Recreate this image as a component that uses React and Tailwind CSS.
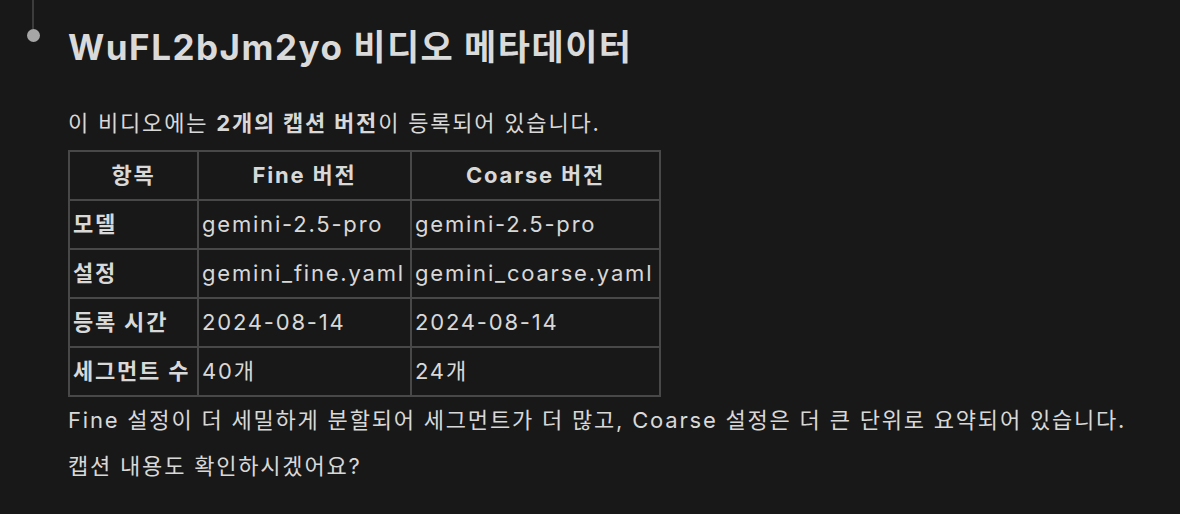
export default function App() {
  const rows = [
    ["모델", "gemini-2.5-pro", "gemini-2.5-pro"],
    ["설정", "gemini_fine.yaml", "gemini_coarse.yaml"],
    ["등록 시간", "2024-08-14", "2024-08-14"],
    ["세그먼트 수", "40개", "24개"],
  ];
  return (
    <div className="w-[1180px] h-[514px] bg-[#181818] text-[#d8d8d8] flex overflow-hidden font-['Inter','Noto_Sans_CJK_KR',sans-serif]">
      <div className="w-[68px] shrink-0 flex flex-col items-center pr-[2px]">
        <div className="w-[2px] h-[29px] bg-[#3c3c3c]"></div>
        <div className="w-[13px] h-[13px] rounded-full bg-[#a6a6a6]"></div>
      </div>
      <div className="flex flex-col">
        <h1 className="mt-[25px] text-[35px] leading-[44px] font-bold text-[#dadada] tracking-[1.5px]">
          WuFL2bJm2yo 비디오 메타데이터
        </h1>
        <p className="mt-[40px] text-[22px] leading-[28px] tracking-[1.8px]">
          이 비디오에는 <b className="font-bold">2개의 캡션 버전</b>이 등록되어 있습니다.
        </p>
        <table className="mt-[13px] border-collapse text-[22px] tracking-[1.8px] w-[591px] table-fixed">
          <colgroup>
            <col className="w-[129px]" />
            <col className="w-[213px]" />
            <col className="w-[249px]" />
          </colgroup>
          <thead>
            <tr className="h-[49px]">
              <th className="border-2 border-[#484848] font-bold text-center">항목</th>
              <th className="border-2 border-[#484848] font-bold text-center">Fine 버전</th>
              <th className="border-2 border-[#484848] font-bold text-center">Coarse 버전</th>
            </tr>
          </thead>
          <tbody>
            {rows.map((r) => (
              <tr key={r[0]} className="h-[49px]">
                <td className="border-2 border-[#484848] font-bold px-[3px] whitespace-nowrap overflow-hidden">{r[0]}</td>
                <td className="border-2 border-[#484848] px-[3px] whitespace-nowrap overflow-hidden">{r[1]}</td>
                <td className="border-2 border-[#484848] px-[3px] whitespace-nowrap overflow-hidden">{r[2]}</td>
              </tr>
            ))}
          </tbody>
        </table>
        <p className="mt-[9px] text-[22px] leading-[28px] tracking-[1.8px] whitespace-nowrap">
          Fine 설정이 더 세밀하게 분할되어 세그먼트가 더 많고, Coarse 설정은 더 큰 단위로 요약되어 있습니다.
        </p>
        <p className="mt-[18px] text-[22px] leading-[28px] tracking-[1.8px]">캡션 내용도 확인하시겠어요?</p>
      </div>
    </div>
  );
}
